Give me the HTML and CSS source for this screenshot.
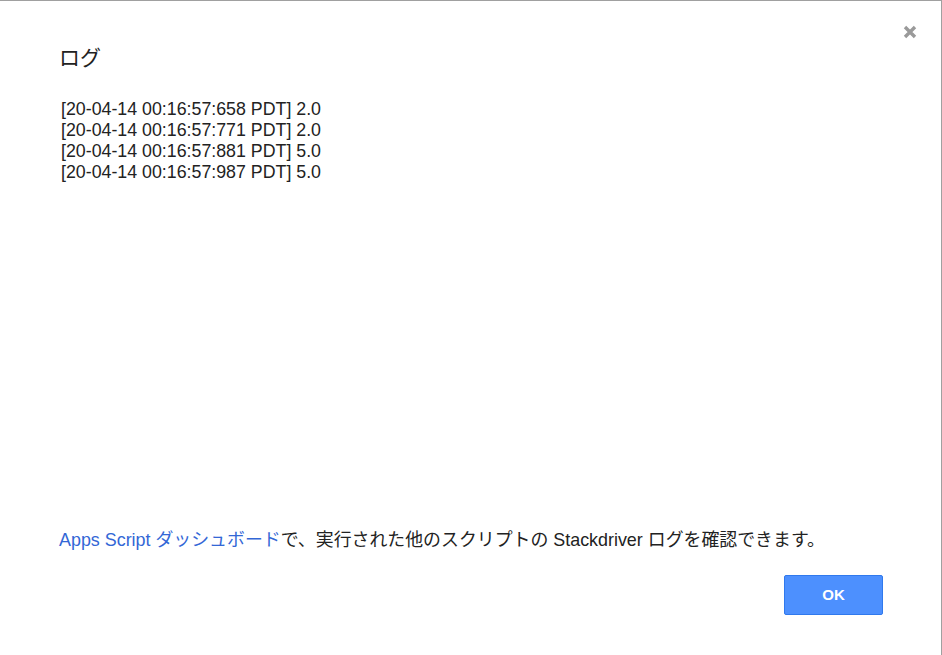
FILE: index.html
```html
<!DOCTYPE html>
<html>
<head>
  <title>ログ</title>
  <link rel="stylesheet" href="styles.css">
</head>
<body>
  <div class="dialog">
    <button class="close-btn" aria-label="閉じる">
      <svg width="16" height="16" viewBox="0 0 16 16"><path d="M3 3 L13 13 M13 3 L3 13" stroke="#9a9a9a" stroke-width="3.4"/></svg>
    </button>
    <h1 class="title">ログ</h1>
    <div class="log">
      <div>[20-04-14 00:16:57:658 PDT] 2.0</div>
      <div>[20-04-14 00:16:57:771 PDT] 2.0</div>
      <div>[20-04-14 00:16:57:881 PDT] 5.0</div>
      <div>[20-04-14 00:16:57:987 PDT] 5.0</div>
    </div>
    <p class="note"><a href="#">Apps Script ダッシュボード</a>で、実行された他のスクリプトの Stackdriver ログを確認できます。</p>
    <div class="actions">
      <button class="ok-btn">OK</button>
    </div>
  </div>
</body>
</html>
```

FILE: styles.css
```css
body {
  margin: 0;
  font-family: Arial, "Liberation Sans", "Noto Sans CJK JP", sans-serif;
  color: #222;
  background: #fff;
}

.dialog {
  height: 655px;
  box-sizing: border-box;
  border-top: 1px solid #a0a0a0;
  border-right: 1px solid #a0a0a0;
  padding: 0 59px;
  display: flex;
  flex-direction: column;
  position: relative;
}

.close-btn {
  position: absolute;
  top: 23px;
  right: 23px;
  border: none;
  background: none;
  padding: 0;
  cursor: pointer;
}

.title {
  font-size: 21px;
  font-weight: normal;
  margin: 45px 0 0;
  line-height: 24px;
}

.log {
  flex: 1;
  margin-top: 29px;
  font-size: 17.8px;
  line-height: 21px;
  padding-left: 2px;
}

.note {
  margin: 0;
  font-size: 17.9px;
  line-height: 24px;
}

.note a {
  color: #3367d6;
  text-decoration: none;
}

.actions {
  display: flex;
  justify-content: flex-end;
  margin: 23px -1px 40px 0;
}

.ok-btn {
  width: 99px;
  height: 40px;
  padding: 0 0 2px;
  background: #4d90fe;
  border: 1px solid #3079ed;
  border-radius: 2px;
  color: #fff;
  font-family: Arial, "Liberation Sans", sans-serif;
  font-weight: bold;
  font-size: 15px;
  cursor: pointer;
}
```
